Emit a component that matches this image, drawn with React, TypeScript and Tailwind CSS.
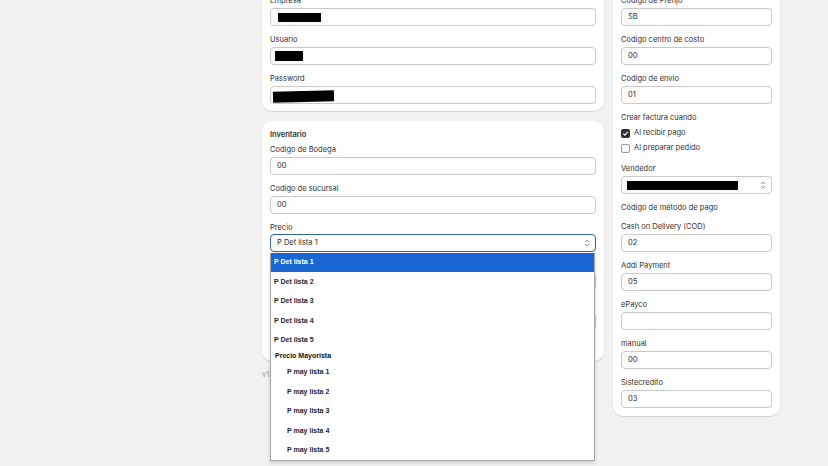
import React from "react";

const font = { fontFamily: "Inter, 'Noto Sans', sans-serif" };

function Chevrons() {
    return (
        <svg width="6" height="8" viewBox="0 0 6 8" fill="none" stroke="#8a8a8a" strokeWidth="0.9">
            <path d="M1 3 L3 1 L5 3" />
            <path d="M1 5 L3 7 L5 5" />
        </svg>
    );
}

function Redacted({ w, h = 9, className = "" }: { w: number; h?: number; className?: string }) {
    return <div className={`bg-black ${className}`} style={{ width: w, height: h }} />;
}

const labelCls = "h-[11px] leading-[12px] text-[7.5px] text-[#303030]";

function Field({ label, value, children }: { label: string; value?: string; children?: React.ReactNode }) {
    return (
        <div className="flex flex-col">
            <div className={labelCls}>{label}</div>
            <div className="mt-[2px] h-[18px] rounded-[4px] border border-[#c9c9c9] bg-[#fdfdfd] px-[6px] flex items-center text-[7.5px] text-[#303030]">
                {children ?? value}
            </div>
        </div>
    );
}

const detalle = ["P Det lista 1", "P Det lista 2", "P Det lista 3", "P Det lista 4", "P Det lista 5"];
const mayorista = ["P may lista 1", "P may lista 2", "P may lista 3", "P may lista 4", "P may lista 5"];

function PrecioSelect() {
    return (
        <div className="flex flex-col">
            <div className={labelCls}>Precio</div>
            <div className="relative mt-[1px]">
                <div className="h-[18px] rounded-[4px] border border-[#3c5f93] bg-[#fdfdfd] pl-[6px] pr-[5px] flex items-center justify-between text-[7.5px] text-[#303030]">
                    <span>P Det lista 1</span>
                    <Chevrons />
                </div>
                {/* open option list */}
                <div
                    className="absolute left-0 right-[1px] top-[calc(100%+1px)] z-10 border border-t-0 border-[#a5a5a5] bg-white shadow-[0_2px_4px_rgba(0,0,0,0.15)] text-[7px] font-bold text-[#1a1f36]"
                    style={{ fontFamily: "'Liberation Sans', Arial, sans-serif" }}
                >
                    {detalle.map((o, i) => (
                        <div
                            key={o}
                            className={`h-[19.4px] flex items-center pl-[3px] ${i === 0 ? "bg-[#1967d2] text-white" : ""}`}
                        >
                            {o}
                        </div>
                    ))}
                    <div className="h-[13px] flex items-center pl-[4px] text-[#111]">Precio Mayorista</div>
                    {mayorista.map((o) => (
                        <div key={o} className="h-[19.4px] flex items-center pl-[16px]">
                            {o}
                        </div>
                    ))}
                </div>
            </div>
        </div>
    );
}

function Check({ checked, label }: { checked?: boolean; label: string }) {
    return (
        <div className="h-[10px] flex items-center gap-[4px] text-[7.5px] text-[#303030]">
            {checked ? (
                <div className="w-[9px] h-[9px] rounded-[2px] bg-[#303030] flex items-center justify-center">
                    <svg width="7" height="7" viewBox="0 0 7 7" fill="none" stroke="white" strokeWidth="1.1">
                        <path d="M1.3 3.6 L2.9 5.2 L5.8 1.8" />
                    </svg>
                </div>
            ) : (
                <div className="w-[9px] h-[9px] rounded-[2px] border border-[#9a9a9a] bg-white" />
            )}
            <span>{label}</span>
        </div>
    );
}

const card = "bg-white rounded-[10px] shadow-[0_1px_1px_rgba(0,0,0,0.12)] px-[8px]";

export default function App() {
    return (
        <div className="w-[828px] h-[466px] overflow-hidden bg-[#f1f1f1]" style={font}>
            <div className="flex gap-[9px] pl-[262px] -mt-[12px]">
                {/* left column */}
                <div className="w-[342px] flex flex-col">
                    <div className={`${card} pt-[7px] pb-[7px] flex flex-col gap-[8px]`}>
                        <Field label="Empresa">
                            <Redacted w={43} className="ml-[1px]" />
                        </Field>
                        <Field label="Usuario">
                            <Redacted w={28} h={10} className="-ml-[2px]" />
                        </Field>
                        <Field label="Password">
                            <Redacted w={61} h={11} className="-ml-[4px] -rotate-[1.5deg] mt-[3px]" />
                        </Field>
                    </div>

                    <div className={`${card} mt-[10px] pt-[8px] pb-[31px] flex flex-col`}>
                        <div className="h-[11px] leading-[12px] text-[7.5px] font-semibold text-[#303030]">Inventario</div>
                        <div className="mt-[4px] flex flex-col gap-[8px]">
                            <Field label="Codigo de Bodega" value="00" />
                            <Field label="Codigo de sucursal" value="00" />
                            <PrecioSelect />
                            <Field label="Lista de precios" value="" />
                            <Field label="Impuesto" value="" />
                        </div>
                    </div>

                    <div className="mt-[8px] text-[7.5px] text-[#a0a0a0]">v1.4.2</div>
                </div>

                {/* right column */}
                <div className="w-[167px] self-start">
                    <div className={`${card} pt-[7px] pb-[8px] flex flex-col gap-[8px]`}>
                        <Field label="Codigo de Prefijo" value="SB" />
                        <Field label="Codigo centro de costo" value="00" />
                        <Field label="Codigo de envio" value="01" />
                        <div className="flex flex-col">
                            <div className={labelCls}>Crear factura cuando</div>
                            <div className="mt-[5px]">
                                <Check checked label="Al recibir pago" />
                            </div>
                            <div className="mt-[5px]">
                                <Check label="Al preparar pedido" />
                            </div>
                        </div>
                        <div className="mt-[2px] flex flex-col">
                            <div className={labelCls}>Vendedor</div>
                            <div className="mt-[2px] h-[18px] rounded-[4px] border border-[#c9c9c9] bg-[#fdfdfd] pl-[5px] pr-[5px] flex items-center justify-between">
                                <Redacted w={111} />
                                <Chevrons />
                            </div>
                        </div>
                        <div className={labelCls}>Código de método de pago</div>
                        <Field label="Cash on Delivery (COD)" value="02" />
                        <Field label="Addi Payment" value="05" />
                        <Field label="ePayco" value="" />
                        <Field label="manual" value="00" />
                        <Field label="Sistecredito" value="03" />
                    </div>
                </div>
            </div>
        </div>
    );
}
